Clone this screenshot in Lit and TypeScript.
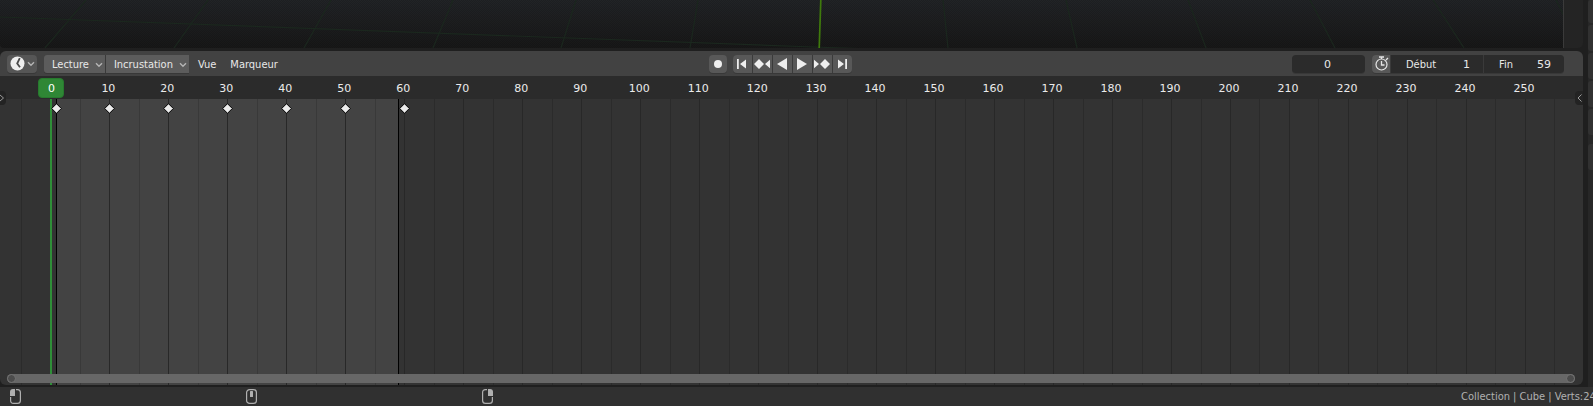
import { LitElement, html, css, svg } from "lit";
import { customElement, property, state } from "lit/decorators.js";

/* Share of the editor width at which a frame is drawn. */
const ORIGIN = 50.4 / 1583;
const PER_FRAME = 5.898 / 1583;
const at = (frame: number) => `${((ORIGIN + frame * PER_FRAME) * 100).toFixed(4)}%`;

const chevron = html`<svg class="chevron" viewBox="0 0 8 6" aria-hidden="true">
  <path d="M1 1.2 L4 4.2 L7 1.2" fill="none" stroke="currentColor" stroke-width="1.4" />
</svg>`;

@customElement("view-port")
class ViewPort extends LitElement {
  static styles = css`
    :host {
      display: flex;
      height: 51px;
      background: #1f1f1f;
    }
    .scene {
      flex: 1;
      height: 48px;
      min-width: 0;
      background:
        repeating-conic-gradient(rgba(0, 0, 0, 0.14) 0 25%, transparent 0 50%) 0 0 / 2px 2px,
        linear-gradient(#222427, #181818);
      border-right: 1px solid #3a3a3a;
      border-bottom-left-radius: 4px;
      overflow: hidden;
    }
    .grid {
      display: block;
      width: 100%;
      height: 100%;
    }
    .region {
      width: 19px;
      height: 48px;
      background: #242424;
      border-bottom-right-radius: 5px;
    }
  `;
  render() {
    const lines = [
      [86, 45], [208, 174], [331, 304], [453, 433], [576, 561], [698, 690],
      [943, 948], [1066, 1077], [1188, 1206], [1310, 1335], [1433, 1464], [1556, 1580],
    ];
    return html`
      <div class="scene">
        <svg class="grid" viewBox="0 0 1563 48" preserveAspectRatio="none" aria-hidden="true">
          <g stroke="#1b271e" stroke-width="1.2" fill="none">
            ${lines.map(([a, b]) => svg`<path d="M${a} 0 L${b} 48" />`)}
            <path d="M0 17 L800 46.500 L870 49" />
          </g>
          <path d="M820.800 0 L819.200 48" stroke="#3f7a0c" stroke-width="1.700" />
        </svg>
      </div>
      <div class="region"></div>
    `;
  }
}

@customElement("timeline-header")
class TimelineHeader extends LitElement {
  static styles = css`
    :host {
      display: grid;
      grid-template-columns: 1fr auto 1fr;
      align-items: center;
      height: 25px;
      padding: 0 19px 0 0;
      background: #424242;
      color: #e8e8e8;
    }
    .left,
    .center,
    .right,
    .set {
      display: flex;
      align-items: center;
    }
    .left {
      padding-left: 7px;
    }
    .center {
      gap: 6px;
      padding-right: 4px;
    }
    .right {
      justify-content: flex-end;
      gap: 7px;
    }
    .set {
      gap: 1px;
      border-radius: 4px;
      overflow: hidden;
      background: #3a3a3a;
      box-shadow: 0 1px 0 #383838;
    }
    .menus {
      margin: 0 2px 0 7px;
      border-radius: 3px 0 0 3px;
    }
    button {
      display: flex;
      align-items: center;
      justify-content: center;
      height: 18px;
      margin: 0;
      padding: 0;
      border: 0;
      background: #585858;
      color: #eeeeee;
      font: inherit;
    }
    .editor {
      width: 30px;
      gap: 2px;
      border-radius: 4px;
      background: #565656;
      box-shadow: 0 1px 0 #383838;
    }
    .drop {
      justify-content: space-between;
      gap: 6px;
      padding: 2px 2px 0 8px;
      background: #5c5c5c;
      color: #e8e8e8;
    }
    .plain {
      padding: 2px 7px 0 7px;
      background: none;
      color: #e8e8e8;
    }
    .key {
      width: 18px;
      border-radius: 4px;
      box-shadow: 0 1px 0 #383838;
    }
    .play {
      width: 19px;
    }
    .glyph {
      width: 18px;
      height: 16px;
      fill: #eeeeee;
    }
    .face {
      width: 15px;
      height: 15px;
    }
    .chevron {
      width: 8px;
      height: 6px;
      color: #b4b4b4;
    }
    .toggle {
      width: 18px;
    }
    .field {
      display: flex;
      align-items: center;
      justify-content: space-between;
      box-sizing: border-box;
      height: 18px;
      padding: 2px 13px 0 15px;
      background: #2b2b2b;
    }
    .start {
      width: 92px;
    }
    .end {
      width: 80px;
    }
    input {
      box-sizing: border-box;
      width: 24px;
      min-width: 0;
      height: 16px;
      margin: 0;
      padding: 0;
      border: 0;
      background: none;
      color: #e8e8e8;
      font-family: "DejaVu Sans", sans-serif;
      font-size: 11px;
      text-align: right;
    }
    .current {
      width: 73px;
      height: 18px;
      padding: 2px 2px 0 0;
      border-radius: 4px;
      background: #2b2b2b;
      text-align: center;
      box-shadow: 0 1px 0 #383838;
    }
  `;

  private glyphs: [string, unknown][] = [
    ["Aller au début", svg`<path d="M4 3h1.800v10H4z M13 3.500v9L7 8z" />`],
    ["Image clé précédente", svg`<path d="M6 3l5 5-5 5-5-5z M17 3.800v8.400L12 8z" />`],
    ["Lecture arrière", svg`<path d="M14 2v12L4 8z" />`],
    ["Lecture avant", svg`<path d="M4 2v12L14 8z" />`],
    ["Image clé suivante", svg`<path d="M12 3l5 5-5 5-5-5z M1 3.800v8.400L6 8z" />`],
    ["Aller à la fin", svg`<path d="M12.200 3H14v10h-1.800z M5 3.500v9L11 8z" />`],
  ];

  render() {
    return html`
      <div class="left">
        <button class="editor" aria-label="Type d'éditeur">
          <svg class="face" viewBox="0 0 15 15" aria-hidden="true">
            <circle cx="7.500" cy="7.500" r="7" fill="#eeeeee" />
            <path d="M9.800 2.200 L7.200 7.500 L10 11.200" fill="none" stroke="#4a4a4a" stroke-width="1.800" />
          </svg>
          ${chevron}
        </button>
        <div class="set menus">
          <button class="drop">Lecture ${chevron}</button>
          <button class="drop">Incrustation ${chevron}</button>
        </div>
        <button class="plain">Vue</button>
        <button class="plain">Marqueur</button>
      </div>
      <div class="center">
        <button class="key" aria-label="Insertion automatique">
          <svg class="glyph" viewBox="0 0 18 16"><circle cx="9" cy="8" r="4" /></svg>
        </button>
        <div class="set">
          ${this.glyphs.map(
            ([name, shape]) => html`<button class="play" aria-label=${name}>
              <svg class="glyph" viewBox="0 0 18 16">${shape}</svg>
            </button>`
          )}
        </div>
      </div>
      <div class="right">
        <input class="current" aria-label="Image courante" inputmode="numeric" .value=${"0"} />
        <div class="set">
          <button class="toggle" aria-label="Plage de prévisualisation">
            <svg class="face" viewBox="0 0 15 15" fill="none" stroke="#e6e6e6" aria-hidden="true">
              <circle cx="7.500" cy="8.500" r="5.500" stroke-width="1.200" />
              <path d="M5 1h5 M7.500 1v2 M12 4l2-2 M7.500 5v4h3" stroke-width="1.300" />
            </svg>
          </button>
          <div class="field start">
            <label for="start">Début</label>
            <input id="start" inputmode="numeric" .value=${"1"} />
          </div>
          <div class="field end">
            <label for="end">Fin</label>
            <input id="end" inputmode="numeric" .value=${"59"} />
          </div>
        </div>
      </div>
    `;
  }
}

@customElement("timeline-tracks")
class TimelineTracks extends LitElement {
  @property({ type: Number }) current = 0;
  @property({ type: Number }) start = 1;
  @property({ type: Number }) end = 59;
  @state() private keys = [1, 10, 20, 30, 40, 50, 60];

  static styles = css`
    :host {
      display: flex;
      flex-direction: column;
      flex: 1;
      min-height: 0;
      position: relative;
      background: #333333;
      font-family: "DejaVu Sans", sans-serif;
    }
    .ruler {
      position: relative;
      height: 23px;
      background: #2b2b2b;
      color: #ebebeb;
      line-height: 25px;
    }
    .number {
      position: absolute;
      width: 40px;
      margin-left: -21px;
      text-align: center;
    }
    .now {
      position: absolute;
      top: 2px;
      box-sizing: border-box;
      width: 26px;
      height: 20px;
      margin-left: -12px;
      border: 1px solid #277a2e;
      border-radius: 4px;
      background: #2f8735;
      color: #ffffff;
      line-height: 19px;
      text-align: center;
    }
    .canvas {
      position: relative;
      flex: 1;
      overflow: hidden;
    }
    .range,
    .tick,
    .bound,
    .playhead {
      position: absolute;
      top: 0;
      bottom: 0;
    }
    .range {
      background: #434343;
    }
    .tick {
      width: 1px;
      background: rgba(0, 0, 0, 0.4);
    }
    .out {
      background: rgba(0, 0, 0, 0.2);
    }
    .minor {
      background: rgba(0, 0, 0, 0.14);
    }
    .bound {
      width: 1px;
      background: #000000;
    }
    .playhead {
      width: 2px;
      background: #2f8f38;
    }
    .diamond {
      position: absolute;
      top: 4px;
      width: 11px;
      height: 11px;
      margin-left: -5px;
    }
    .scroll {
      position: absolute;
      left: 7px;
      right: 8px;
      bottom: 2px;
      display: flex;
      justify-content: space-between;
      height: 9px;
      border-radius: 5px;
      background: #676767;
    }
    .grip {
      box-sizing: border-box;
      width: 9px;
      height: 9px;
      border: 1px solid #747474;
      border-radius: 50%;
      background: #4c4c4c;
    }
    .tab {
      position: absolute;
      top: 15px;
      width: 8px;
      height: 14px;
      padding: 0;
      border: 0;
      background: #232323;
      color: #9a9a9a;
    }
    .west {
      left: -2px;
      border-radius: 0 4px 4px 0;
    }
    .east {
      right: 0;
      border-radius: 4px 0 0 4px;
    }
    .arrow {
      display: block;
      width: 8px;
      height: 14px;
    }
  `;

  render() {
    const ticks = Array.from({ length: 53 }, (_, i) => (i - 1) * 5);
    const numbers = Array.from({ length: 25 }, (_, i) => (i + 1) * 10);
    const width = `${((this.end - this.start) * PER_FRAME * 100).toFixed(4)}%`;
    const kind = (f: number) => (f % 10 ? "tick minor" : f > this.end ? "tick out" : "tick");
    return html`
      <div class="ruler">
        ${numbers.map((n) => html`<span class="number" style="left:${at(n)}">${n}</span>`)}
        <span class="now" style="left:${at(this.current)}">${this.current}</span>
      </div>
      <div class="canvas">
        <div class="range" style="left:${at(this.start)};width:${width}"></div>
        ${ticks.map((f) => html`<div class=${kind(f)} style="left:${at(f)}"></div>`)}
        <div class="bound" style="left:${at(this.start)}"></div>
        <div class="bound" style="left:${at(this.end)}"></div>
        <div class="playhead" style="left:${at(this.current)}"></div>
        ${this.keys.map(
          (k) => html`<svg class="diamond" style="left:${at(k)}" viewBox="0 0 11 11">
            <path d="M5.500 0.700 L10.300 5.500 L5.500 10.300 L0.700 5.500z" fill="#ececec" stroke="#000000" stroke-width="1" />
          </svg>`
        )}
        <div class="scroll"><span class="grip"></span><span class="grip"></span></div>
      </div>
      <button class="tab west" aria-label="Afficher les canaux">
        <svg class="arrow" viewBox="0 0 8 14"><path d="M2 4l3.500 3L2 10" fill="none" stroke="currentColor" /></svg>
      </button>
      <button class="tab east" aria-label="Afficher le panneau">
        <svg class="arrow" viewBox="0 0 8 14"><path d="M6.500 3.500L3 7l3.500 3.500" fill="none" stroke="currentColor" /></svg>
      </button>
    `;
  }
}

@customElement("status-bar")
class StatusBar extends LitElement {
  static styles = css`
    :host {
      display: flex;
      align-items: center;
      justify-content: space-between;
      height: 19px;
      padding-left: 10px;
      overflow: hidden;
      background: #303030;
      color: #b0b0b0;
    }
    .hints {
      display: flex;
      gap: 225px;
    }
    .mouse {
      display: block;
      width: 11px;
      height: 15px;
      fill: none;
      stroke: #b0b0b0;
      stroke-width: 1.2;
    }
    .solid {
      fill: #b0b0b0;
      stroke: none;
    }
    .stats {
      width: 132px;
      white-space: nowrap;
    }
  `;
  render() {
    return html`
      <div class="hints">
        <svg class="mouse" viewBox="0 0 11 15">
          <path d="M6 0.600H7.500Q10.400 0.600 10.400 3.500V11.500Q10.400 14.400 7.500 14.400H3.500Q0.600 14.400 0.600 11.500V8" />
          <path class="solid" d="M0 7V3Q0 0 3 0H5V7z" />
        </svg>
        <svg class="mouse" viewBox="0 0 11 15">
          <rect x="0.600" y="0.600" width="9.800" height="13.800" rx="3" />
          <rect class="solid" x="4" y="2" width="3" height="6" rx="0.500" />
        </svg>
        <svg class="mouse" viewBox="0 0 11 15">
          <path d="M5 0.600H3.500Q0.600 0.600 0.600 3.500V11.500Q0.600 14.400 3.500 14.400H7.500Q10.400 14.400 10.400 11.500V8" />
          <path class="solid" d="M11 7V3Q11 0 8 0H6V7z" />
        </svg>
      </div>
      <div class="stats">Collection | Cube | Verts:24</div>
    `;
  }
}

@customElement("app-root")
class AppRoot extends LitElement {
  static styles = css`
    :host {
      display: flex;
      flex-direction: column;
      height: 100vh;
      overflow: hidden;
      background: #1f1f1f;
      font-family: "DejaVu Sans Condensed", "Noto Sans", sans-serif;
      font-size: 11px;
      line-height: 16px;
    }
    .work {
      display: flex;
      flex: 1;
      min-height: 0;
      gap: 5px;
    }
    .main {
      display: flex;
      flex-direction: column;
      flex: 1;
      min-width: 0;
    }
    .editor {
      display: flex;
      flex-direction: column;
      flex: 1;
      min-height: 0;
      margin-bottom: 2px;
      border-radius: 6px;
      overflow: hidden;
    }
    .side {
      display: flex;
      flex-direction: column;
      gap: 2px;
      width: 5px;
      background: #272727;
    }
    .panel {
      height: 26px;
      border-radius: 3px 0 0 3px;
      background: #313131;
    }
    .first {
      height: 23px;
    }
    .apart {
      margin-top: 7px;
    }
  `;
  render() {
    return html`
      <div class="work">
        <div class="main">
          <view-port></view-port>
          <div class="editor">
            <timeline-header></timeline-header>
            <timeline-tracks></timeline-tracks>
          </div>
        </div>
        <div class="side">
          <div class="panel first"></div>
          <div class="panel"></div>
          <div class="panel"></div>
          <div class="panel"></div>
          <div class="panel"></div>
          <div class="panel apart"></div>
        </div>
      </div>
      <status-bar></status-bar>
    `;
  }
}
